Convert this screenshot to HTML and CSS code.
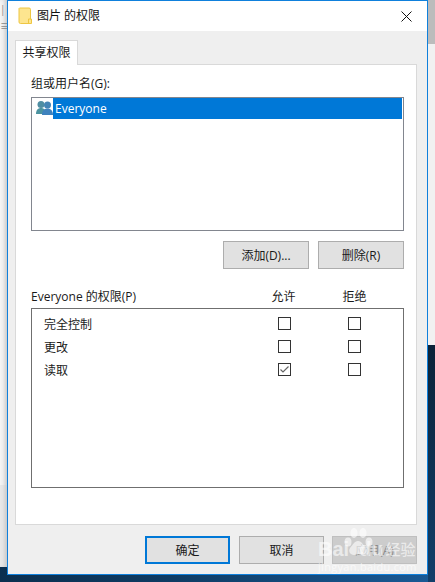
FILE: index.html
```html
<!DOCTYPE html>
<html>
  <head>
    <title>图片 的权限</title>
    <link rel="stylesheet" href="styles.css">
  </head>
  <body>
    <div class="desktop">
      <div class="behind-left"><span class="behind-text">|≡</span></div>
      <div class="behind-right"></div>

      <div class="dialog">
        <div class="titlebar">
          <svg class="folder" width="14" height="18" viewBox="0 0 14 18">
            <path d="M1.5 1h9.500a1.500 1.500 0 0 1 1.500 1.500V12h1v4.500H2.500A1.500 1.500 0 0 1 1 15V1.500z" fill="#fde58f" stroke="#eec643"/>
            <path d="M10.500 16.500V12h2.500" fill="none" stroke="#eec643"/>
          </svg>
          <span class="title">图片 的权限</span>
          <svg class="close" width="11" height="11" viewBox="0 0 11 11">
            <path d="M.5 .5l10 10M10.500 .5l-10 10" stroke="#111" fill="none"/>
          </svg>
        </div>

        <div class="content">
          <div class="tabs"><div class="tab">共享权限</div></div>
          <div class="panel">
            <div class="label">组或用户名(G):</div>
            <div class="userlist">
              <div class="user">
                <svg class="users" width="17" height="17" viewBox="0 0 17 17">
                  <circle cx="5" cy="4.500" r="3.500" fill="#4f8ea3"/>
                  <path d="M0 14c0-4 2-6 5-6s5 2 5 6z" fill="#4b93a0"/>
                  <circle cx="11.500" cy="5" r="3.500" fill="#4585b5"/>
                  <path d="M6 15c0-4 2-6.500 5.500-6.500S17 11 17 15z" fill="#3f82bd"/>
                </svg>
                <span class="user-name">Everyone</span>
              </div>
            </div>

            <div class="list-buttons">
              <button class="btn">添加(D)...</button>
              <button class="btn">删除(R)</button>
            </div>

            <div class="perm-head">
              <span class="perm-title">Everyone 的权限(P)</span>
              <span class="perm-col">允许</span>
              <span class="perm-col">拒绝</span>
            </div>
            <div class="perm-box">
              <div class="perm-row">
                <span class="perm-name">完全控制</span>
                <span class="check"></span>
                <span class="check"></span>
              </div>
              <div class="perm-row">
                <span class="perm-name">更改</span>
                <span class="check"></span>
                <span class="check"></span>
              </div>
              <div class="perm-row">
                <span class="perm-name">读取</span>
                <span class="check">
                  <svg width="11" height="11" viewBox="0 0 11 11">
                    <path d="M1.500 5.500l2.500 2.500 5.500-5.500" fill="none" stroke="#666" stroke-width="1.200"/>
                  </svg>
                </span>
                <span class="check"></span>
              </div>
            </div>
          </div>

          <div class="footer">
            <button class="btn btn-default">确定</button>
            <button class="btn">取消</button>
            <button class="btn btn-disabled">应用(A)</button>
          </div>
        </div>
      </div>

      <div class="watermark">
        <svg class="paw" width="32" height="30" viewBox="0 0 32 30">
          <ellipse cx="6" cy="15" rx="3.500" ry="4.500" fill="#fff"/>
          <ellipse cx="12" cy="6" rx="3.500" ry="5" fill="#fff"/>
          <ellipse cx="21" cy="6" rx="3.500" ry="5" fill="#fff"/>
          <ellipse cx="27" cy="15" rx="3.500" ry="4.500" fill="#fff"/>
          <path d="M16 14c-4 0-5 4-8 7-2 3 0 7 4 7 2 0 3-1 4-1s2 1 4 1c4 0 6-4 4-7-3-3-4-7-8-7z" fill="#fff"/>
        </svg>
        <div class="wm-main">Bai<span class="wm-gap"></span>du<span class="wm-cn">经验</span></div>
        <div class="wm-url">jingyan.baidu.com</div>
      </div>
    </div>
  </body>
</html>
```

FILE: styles.css
```css
html, body {
  margin: 0;
  padding: 0;
}
body {
  font-family: "Open Sans", "Noto Sans CJK SC", sans-serif;
  font-size: 12px;
  color: #1a1a1a;
}
button {
  font: inherit;
  color: inherit;
}

.desktop {
  position: relative;
  width: 435px;
  height: 582px;
  overflow: hidden;
  background: linear-gradient(90deg, #0b2f4f 0%, #0f3c64 40%, #1a5a96 100%);
}
.behind-left {
  position: absolute;
  left: 0;
  top: 0;
  width: 7px;
  height: 567px;
  background: linear-gradient(180deg, #f4f4f4 0, #f4f4f4 485px, #e8e8e8 485px);
  box-shadow: inset -4px 0 4px -2px #c4c4c4;
}
.behind-text {
  font-size: 10px;
  color: #888;
}
.behind-right {
  position: absolute;
  left: 428px;
  top: 0;
  width: 7px;
  height: 345px;
  background: linear-gradient(180deg, #bcbcbc 0, #bcbcbc 44px, #f1f1f1 44px);
}
.behind-right::after {
  content: "";
  position: absolute;
  left: 0;
  top: 345px;
  width: 7px;
  height: 237px;
  background: linear-gradient(180deg, #0a2238, #123f6a);
}

.dialog {
  position: absolute;
  left: 7px;
  top: 0;
  width: 421px;
  height: 575px;
  box-sizing: border-box;
  border: 1px solid #0f80dc;
  background: #efefef;
  display: flex;
  flex-direction: column;
}
.titlebar {
  height: 30px;
  background: #fff;
  display: flex;
  align-items: center;
  padding: 0 15px 0 10px;
  flex-shrink: 0;
}
.title {
  margin-left: 5px;
  flex: 1;
  line-height: 30px;
  color: #111;
}
.content {
  flex: 1;
  padding: 9px 10px 0 7px;
  display: flex;
  flex-direction: column;
}

.tabs {
  display: flex;
  height: 24px;
  position: relative;
}
.tab {
  width: 63px;
  height: 25px;
  box-sizing: border-box;
  border: 1px solid #d9d9d9;
  border-bottom: none;
  background: #fff;
  text-align: center;
  line-height: 23px;
  position: relative;
  z-index: 1;
}
.panel {
  height: 461px;
  box-sizing: border-box;
  border: 1px solid #d9d9d9;
  background: #fff;
  padding: 9px 12px 0 15px;
}
.label {
  height: 23px;
  line-height: 19px;
}
.userlist {
  height: 134px;
  box-sizing: border-box;
  border: 1px solid #82868f;
  padding: 0 1px 0 4px;
}
.user {
  display: flex;
  align-items: center;
  height: 21px;
}
.users {
  flex-shrink: 0;
}
.user-name {
  flex: 1;
  height: 21px;
  line-height: 21px;
  background: #0078d7;
  color: #fff;
  padding-left: 2px;
}

.list-buttons {
  display: flex;
  justify-content: flex-end;
  gap: 9px;
  margin-top: 10px;
}
.btn {
  width: 86px;
  height: 28px;
  box-sizing: border-box;
  border: 1px solid #adadad;
  background: #e1e1e1;
  padding: 1px 0 0;
  line-height: 24px;
}
.btn-default {
  border: 2px solid #0078d7;
}
.btn-disabled {
  border-color: #bfbfbf;
  background: #cccccc;
  color: #8a8a8a;
}

.perm-head {
  display: flex;
  margin-top: 18px;
  height: 21px;
  line-height: 20px;
}
.perm-title {
  width: 217px;
}
.perm-col {
  width: 71px;
  text-align: center;
}
.perm-box {
  height: 180px;
  box-sizing: border-box;
  border: 1px solid #6f6f6f;
  padding-top: 3px;
}
.perm-row {
  display: flex;
  align-items: center;
  height: 23px;
  padding-left: 12px;
  gap: 57px;
}
.perm-name {
  width: 177px;
  flex-shrink: 0;
}
.check {
  width: 13px;
  height: 13px;
  box-sizing: border-box;
  border: 1px solid #333;
  background: #fff;
  display: flex;
  align-items: center;
  justify-content: center;
  flex-shrink: 0;
}

.footer {
  display: flex;
  gap: 9px;
  padding-left: 130px;
  margin-top: 11px;
}
.footer .btn:last-child {
  margin-left: -1px;
}

.watermark {
  position: absolute;
  left: 318px;
  top: 527px;
  width: 92px;
  height: 48px;
  color: rgba(255, 255, 255, 0.62);
}
.paw {
  position: absolute;
  left: 24px;
  top: 0;
  opacity: 0.62;
}
.wm-main {
  position: absolute;
  left: 0;
  top: 10px;
  font-family: "Liberation Sans", sans-serif;
  font-size: 20px;
  font-weight: bold;
  line-height: 24px;
  white-space: nowrap;
  display: flex;
}
.wm-gap {
  width: 10px;
}
.wm-cn {
  font-family: "Noto Sans CJK SC", sans-serif;
  font-size: 15px;
  font-weight: 500;
  margin-left: 2px;
}
.wm-url {
  position: absolute;
  left: 0;
  top: 33px;
  font-size: 11px;
  line-height: 14px;
  letter-spacing: 0.3px;
  white-space: nowrap;
}
```
